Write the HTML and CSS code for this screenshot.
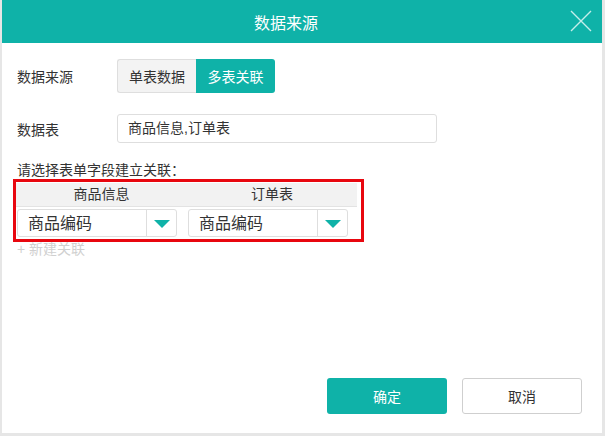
FILE: index.html
```html
<!DOCTYPE html>
<html lang="zh-CN">
<head>
    <meta charset="UTF-8">
    <title>数据来源</title>
<link rel="stylesheet" href="styles.css">
</head>
<body>
    <div class="dialog">
        <div class="dialog-header">
            <h1 class="dialog-title">数据来源</h1>
            <svg class="close-icon" width="22" height="22" viewBox="0 0 22 22">
                <path d="M1 1 L21 21 M21 1 L1 21" stroke="#c4eeea" stroke-width="1.4" fill="none"/>
            </svg>
        </div>
        <div class="dialog-body">
            <div class="form-row row-source">
                <span class="form-label">数据来源</span>
                <div class="segmented">
                    <span class="seg-item">单表数据</span>
                    <span class="seg-item active">多表关联</span>
                </div>
            </div>
            <div class="form-row row-table">
                <span class="form-label">数据表</span>
                <div class="text-input">商品信息,订单表</div>
            </div>
            <p class="hint">请选择表单字段建立关联：</p>
            <div class="relation-box">
                <div class="relation-table">
                    <div class="rel-head">商品信息</div>
                    <div class="rel-head">订单表</div>
                    <div class="rel-cell">
                        <div class="select">
                            <span class="select-value">商品编码</span>
                            <span class="select-arrow"><i class="triangle"></i></span>
                        </div>
                    </div>
                    <div class="rel-cell">
                        <div class="select">
                            <span class="select-value">商品编码</span>
                            <span class="select-arrow"><i class="triangle"></i></span>
                        </div>
                    </div>
                </div>
            </div>
            <div class="add-link">+ 新建关联</div>
        </div>
        <div class="dialog-footer">
            <button class="btn btn-primary">确定</button>
            <button class="btn btn-default">取消</button>
        </div>
    </div>
</body>
</html>
```

FILE: styles.css
```css
/* styles.css */

body {
    margin: 0;
    background-color: #e6e6e6;
    font-family: "Liberation Sans", "Noto Sans CJK SC", sans-serif;
    color: #333;
}

.dialog {
    margin-left: 2px;
    width: 600px;
    height: 433px;
    background-color: #fff;
    display: flex;
    flex-direction: column;
}

.dialog-header {
    height: 43px;
    background-color: #0fb2a8;
    display: flex;
    align-items: center;
}

.dialog-title {
    flex: 1;
    margin: 0;
    text-align: center;
    font-size: 16px;
    font-weight: normal;
    color: #fff;
}

.close-icon {
    margin: 0 10px 1px 0;
}

.dialog-body {
    flex: 1;
    padding: 16px 15px 0 15px;
}

.form-row {
    display: flex;
    align-items: center;
}

.form-label {
    width: 100px;
    font-size: 14px;
}

.segmented {
    display: flex;
    height: 34px;
    font-size: 14px;
}

.seg-item {
    width: 78px;
    display: flex;
    align-items: center;
    justify-content: center;
    background-color: #f3f3f3;
    border: 1px solid #dedede;
    border-right: none;
    border-radius: 3px 0 0 3px;
}

.seg-item.active {
    width: 79px;
    background-color: #0fb2a8;
    border: none;
    color: #fff;
    border-radius: 0 3px 3px 0;
}

.row-table {
    margin-top: 21px;
}

.text-input {
    width: 308px;
    height: 27px;
    line-height: 27px;
    padding-left: 10px;
    border: 1px solid #dedede;
    border-radius: 3px;
    font-size: 14px;
}

.hint {
    margin: 18px 0 0 0;
    font-size: 14px;
    line-height: 18px;
}

.relation-box {
    margin-left: -4px;
    width: 343px;
    padding: 0 2px 2px 0;
    border: 3px solid #e8070f;
}

.relation-table {
    display: grid;
    grid-template-columns: 171px 170px;
}

.rel-head {
    height: 23px;
    line-height: 23px;
    margin-top: 1px;
    text-align: center;
    font-size: 14px;
    background-color: #f2f2f2;
    border-bottom: 1px solid #e3e3e3;
}

.rel-cell {
    padding: 2px 0 0 1px;
}

.select {
    width: 158px;
    height: 26px;
    display: flex;
    border: 1px solid #dedede;
    border-radius: 3px;
}

.select-value {
    flex: 1;
    padding-left: 10px;
    font-size: 16px;
    line-height: 27px;
}

.select-arrow {
    width: 29px;
    border-left: 1px solid #dedede;
    display: flex;
    align-items: center;
    justify-content: center;
}

.triangle {
    width: 0;
    height: 0;
    border-left: 8px solid transparent;
    border-right: 8px solid transparent;
    border-top: 8px solid #0fb2a8;
    margin-top: 1px;
}

.add-link {
    margin-top: 0;
    font-size: 14px;
    line-height: 14px;
    color: #d0d0d0;
}

.dialog-footer {
    display: flex;
    justify-content: flex-end;
    gap: 15px;
    padding: 0 20px 19px 0;
}

.btn {
    width: 120px;
    height: 36px;
    font-family: inherit;
    font-size: 14px;
    border-radius: 3px;
    cursor: pointer;
}

.btn-primary {
    background-color: #0fb2a8;
    border: none;
    color: #fff;
}

.btn-default {
    background-color: #fff;
    border: 1px solid #cfcfcf;
    color: #333;
}
```
